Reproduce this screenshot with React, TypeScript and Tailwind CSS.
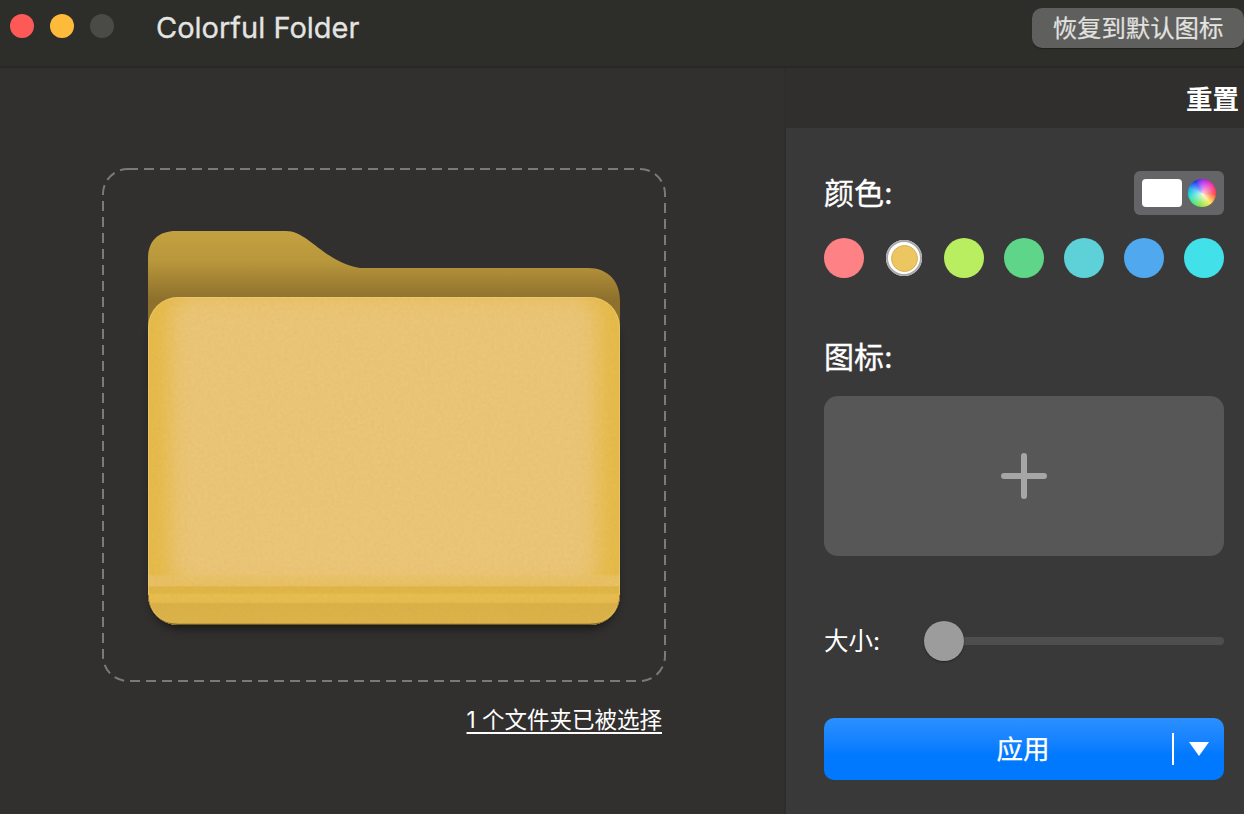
const CJK = "font-['Inter','Noto_Sans_CJK_SC',sans-serif]";

function Folder() {
  return (
    <svg width="472" height="394" viewBox="0 0 472 394" className="block overflow-visible">
      <defs>
        <linearGradient id="back" gradientUnits="userSpaceOnUse" x1="0" y1="0" x2="0" y2="68">
          <stop offset="0" stopColor="#c4a140" />
          <stop offset="0.45" stopColor="#b8963b" />
          <stop offset="1" stopColor="#8e712d" />
        </linearGradient>
        <linearGradient id="bottom" x1="0" y1="0" x2="0" y2="1">
          <stop offset="0" stopColor="#eac368" stopOpacity="0" />
          <stop offset="0.2" stopColor="#eac368" stopOpacity="0" />
          <stop offset="0.24" stopColor="#eac368" stopOpacity="0.75" />
          <stop offset="0.38" stopColor="#eac164" />
          <stop offset="0.41" stopColor="#e0b545" />
          <stop offset="0.5" stopColor="#e1b746" />
          <stop offset="0.53" stopColor="#e8be50" />
          <stop offset="0.64" stopColor="#e8bd4e" />
          <stop offset="0.67" stopColor="#dab147" />
          <stop offset="1" stopColor="#ddb449" />
        </linearGradient>
        <filter id="soft" x="-10%" y="-10%" width="120%" height="120%">
          <feGaussianBlur stdDeviation="10" />
        </filter>
        <filter id="shadow" x="-10%" y="-10%" width="120%" height="120%">
          <feGaussianBlur stdDeviation="5" />
        </filter>
        <filter id="grain" x="0" y="0" width="100%" height="100%">
          <feTurbulence type="fractalNoise" baseFrequency="0.3" numOctaves="3" seed="4" />
          <feColorMatrix values="0 0 0 0 0.45  0 0 0 0 0.33  0 0 0 0 0.1  0.5 0 0 0 -0.13" />
        </filter>
        <clipPath id="frontClip">
          <rect x="0" y="66" width="472" height="328" rx="30" />
        </clipPath>
      </defs>
      <rect x="3" y="80" width="466" height="318" rx="30" fill="#000" opacity="0.5" filter="url(#shadow)" />
      <path
        d="M0 28C0 10 10 0 28 0L138 0C160 0 176 31 212 37L440 37C460 37 472 50 472 70L472 120L0 120Z"
        fill="url(#back)"
      />
      <g clipPath="url(#frontClip)">
        <rect x="0" y="66" width="472" height="328" fill="#e7bb48" />
        <rect x="22" y="64" width="428" height="292" rx="24" fill="#ecc678" filter="url(#soft)" />
        <rect x="0" y="330" width="472" height="64" fill="url(#bottom)" />
        <rect x="0" y="66" width="472" height="328" filter="url(#grain)" opacity="0.35" />
        <rect x="0.5" y="66.5" width="471" height="327" rx="30" fill="none" stroke="#f0cd84" strokeOpacity="0.5" />
        <path d="M0 364C0 382 12 393.5 30 393.5L442 393.5C460 393.5 472 382 472 364" fill="none" stroke="#6f5a24" strokeWidth="1.5" />
      </g>
    </svg>
  );
}

function Dot({ c }: { c: string }) {
  return <div className={`h-6 w-6 rounded-full ${c}`} />;
}

function Swatch({ c }: { c: string }) {
  return <div className={`h-10 w-10 rounded-full ${c}`} />;
}

export default function App() {
  return (
    <div className={`flex h-[814px] w-[1244px] flex-col overflow-hidden bg-[#31302f] text-white ${CJK}`}>
      <header className="flex h-[68px] shrink-0 items-start border-b-2 border-[#272725] bg-[#2d2d2a]">
        <div className="ml-[10px] mt-[14px] flex gap-4">
          <Dot c="bg-[#fd5a57]" />
          <Dot c="bg-[#febb3b]" />
          <Dot c="bg-[#4a4a46]" />
        </div>
        <div className="ml-[42px] mt-[9px] text-[29px] leading-[38px] text-[#e4e4e2] [-webkit-text-stroke:0.3px]">Colorful Folder</div>
        <button className="ml-auto mr-0 mt-2 h-10 w-[212px] rounded-[10px] bg-[#5f5f5d] text-center text-[24.4px] leading-[40px] text-[#e2e2e0] shadow-[0_1px_1px_rgba(0,0,0,0.3)] [-webkit-text-stroke:0.2px]">
          恢复到默认图标
        </button>
      </header>

      <div className="flex min-h-0 flex-1">
        <main className="flex w-[784px] shrink-0 flex-col items-start pl-[102px] pt-[100px]">
          <div className="relative flex h-[514px] w-[564px] items-center justify-center pt-[6px]">
            <svg width="564" height="514" className="absolute left-0 top-0">
              <rect x="1" y="1" width="562" height="512" rx="25" fill="none" stroke="#7a7a7a" strokeWidth="2" strokeDasharray="10 6" />
            </svg>
            <div className="relative">
              <Folder />
            </div>
          </div>
          <div className="mt-[24px] w-[560px] text-right text-[22.5px] leading-[28px] text-white underline underline-offset-4">
            1 个文件夹已被选择
          </div>
        </main>

        <aside className="flex w-[460px] shrink-0 flex-col border-l-2 border-[#2d2d2a]">
          <div className="h-[60px] shrink-0 bg-[#302f2e] pr-[5px] pt-[13px] text-right text-[26.5px] font-bold leading-[36px]">
            重置
          </div>
          <div className="flex flex-1 flex-col bg-[#393939] pl-[38px] pr-5">
            <div className="mt-[43px] flex h-11 items-center justify-between">
              <span className="text-[30px] leading-[40px] [-webkit-text-stroke:0.3px]">颜色:</span>
              <div className="flex h-11 w-[90px] items-center gap-[6px] rounded-md bg-[#656467] pl-2">
                <div className="h-7 w-10 rounded bg-white" />
                <div className="h-7 w-7 rounded-full bg-[radial-gradient(circle_at_52%_55%,rgba(255,255,255,0.8)_0%,rgba(255,255,255,0.45)_30%,rgba(255,255,255,0)_72%),conic-gradient(from_0deg,#a020f0,#f020b0_45deg,#ff2a2a_95deg,#ffe02a_140deg,#5ce02a_190deg,#12e0c0_250deg,#12a8f0_290deg,#1a30f0_330deg,#a020f0)]" />
              </div>
            </div>
            <div className="mt-[23px] flex h-10 items-center gap-5">
              <Swatch c="bg-[#fe8285]" />
              <div className="mx-[2px] flex h-9 w-9 items-center justify-center rounded-full bg-white shadow-[inset_0_0_0_2px_#a9a9a9]">
                <div className="h-[27px] w-[27px] rounded-full border border-[#dcb055] bg-[#ebc661]" />
              </div>
              <Swatch c="bg-[#b8ee5f]" />
              <Swatch c="bg-[#5ed589]" />
              <Swatch c="bg-[#5ed0d8]" />
              <Swatch c="bg-[#50a9ee]" />
              <Swatch c="bg-[#42e0e9]" />
            </div>
            <div className="mt-[59px] text-[30px] leading-[40px] [-webkit-text-stroke:0.3px]">图标:</div>
            <div className="mt-[19px] flex h-40 items-center justify-center rounded-[14px] bg-[#575757]">
              <svg width="46" height="46" viewBox="0 0 46 46">
                <path d="M23 3V43M3 23H43" stroke="#a6a6a6" strokeWidth="6" strokeLinecap="round" />
              </svg>
            </div>
            <div className="mt-[65px] flex h-10 items-center">
              <span className="w-[100px] shrink-0 text-[24.5px] leading-[40px]">大小:</span>
              <div className="flex flex-1 items-center">
                <div className="z-10 h-10 w-10 shrink-0 rounded-full bg-[#9c9c9c] shadow-[0_1px_2px_rgba(0,0,0,0.35)]" />
                <div className="h-2 flex-1 rounded-r-full bg-[#4e4e4e]" />
              </div>
            </div>
            <button className="relative mt-[57px] flex h-[62px] items-center justify-center rounded-[10px] bg-gradient-to-b from-[#2b90ff] to-[#0079ff] to-60% pr-[2px] text-[26.5px] leading-[62px] [-webkit-text-stroke:0.3px]">
              应用
              <span className="absolute left-[348px] top-[15px] h-8 w-[2px] bg-white" />
              <svg width="20" height="14" viewBox="0 0 20 14" className="absolute left-[365px] top-[24px]">
                <path d="M0 0H20L10 14Z" fill="#fff" />
              </svg>
            </button>
          </div>
        </aside>
      </div>
    </div>
  );
}
